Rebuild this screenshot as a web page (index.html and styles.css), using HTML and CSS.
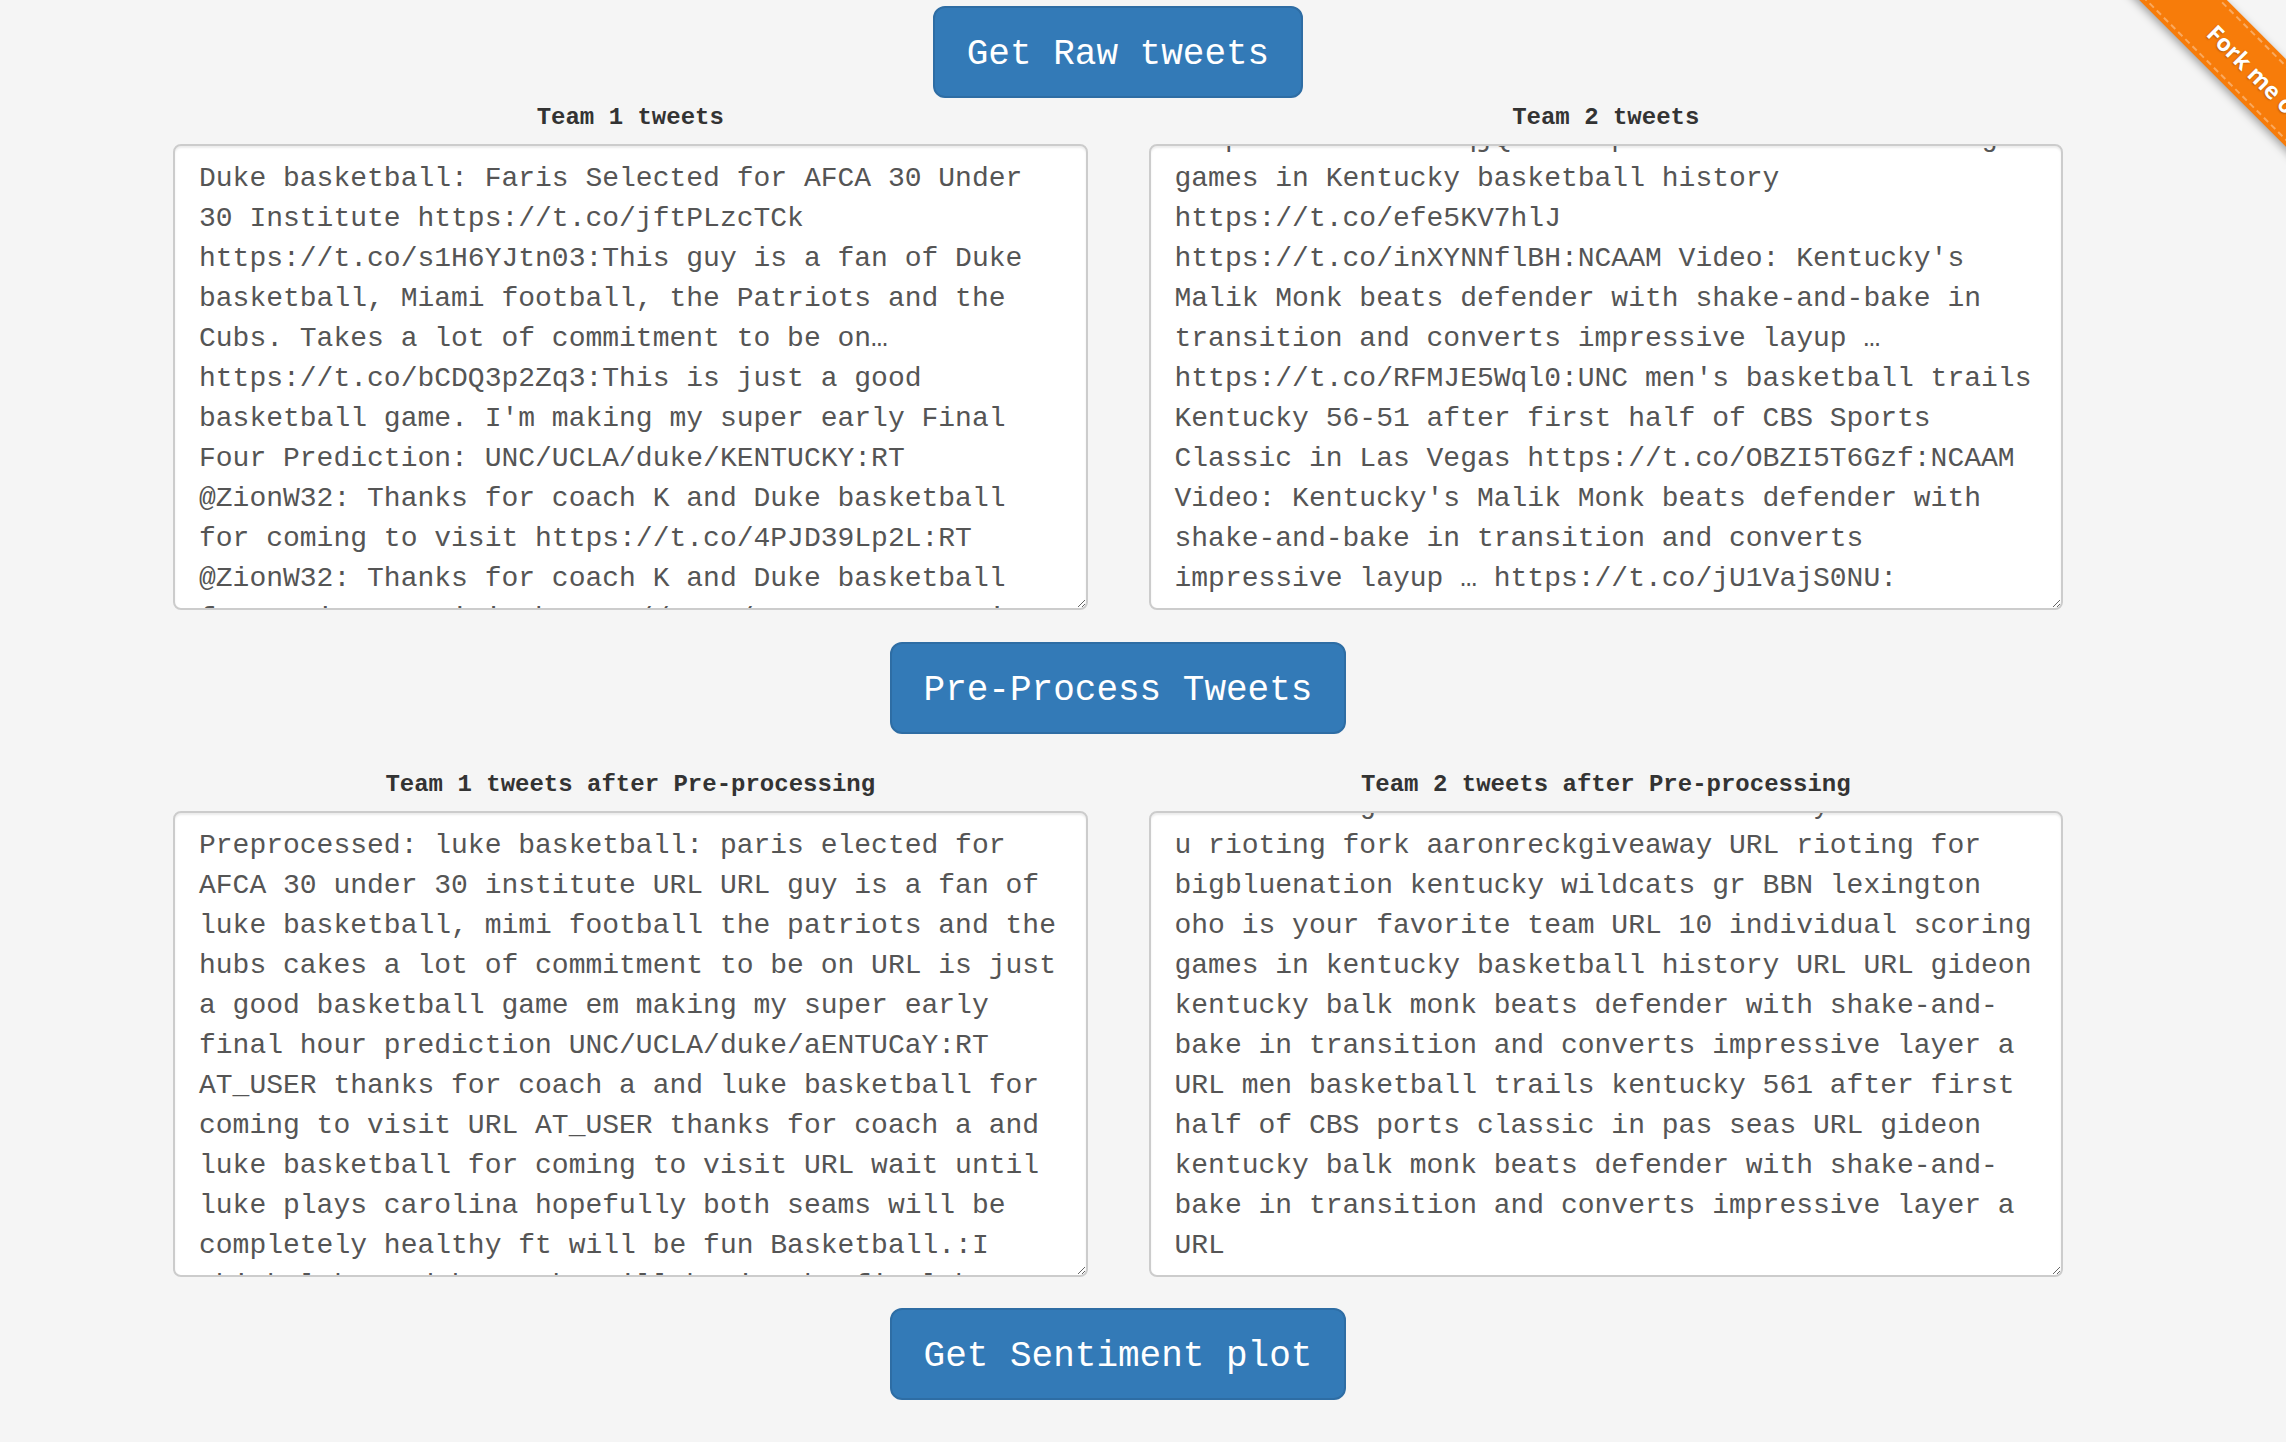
FILE: index.html
```html
<!DOCTYPE html>
<html lang="en">
<head>
<meta charset="utf-8">
<title>Tweet Sentiment</title>
<link rel="stylesheet" href="styles.css">
</head>
<body>
<div class="ribbon-wrap"><a class="ribbon" href="#"><span class="ribbon-text">Fork me on GitHub</span></a></div>
<main class="page">
  <div class="actions"><button class="btn">Get Raw tweets</button></div>
  <div class="pair pair-raw">
    <div class="field">
      <label class="field-label" for="t1">Team 1 tweets</label>
      <textarea id="t1" class="tweets">Duke basketball: Faris Selected for AFCA 30 Under 30 Institute https://t.co/jftPLzcTCk https://t.co/s1H6YJtn03:This guy is a fan of Duke basketball, Miami football, the Patriots and the Cubs. Takes a lot of commitment to be on… https://t.co/bCDQ3p2Zq3:This is just a good basketball game. I'm making my super early Final Four Prediction: UNC/UCLA/duke/KENTUCKY:RT @ZionW32: Thanks for coach K and Duke basketball for coming to visit https://t.co/4PJD39Lp2L:RT @ZionW32: Thanks for coach K and Duke basketball for coming to visit https://t.co/4PJD39Lp2L:Can't wait until Duke plays Carolina hopefully both teams will be completely healthy it will be fun Basketball.:</textarea>
    </div>
    <div class="field">
      <label class="field-label" for="t2">Team 2 tweets</label>
      <textarea id="t2" class="tweets">https://t.co/Ze1oqjQuzE:Top 10 individual scoring games in Kentucky basketball history https://t.co/efe5KV7hlJ https://t.co/inXYNNflBH:NCAAM Video: Kentucky's Malik Monk beats defender with shake-and-bake in transition and converts impressive layup … https://t.co/RFMJE5Wql0:UNC men's basketball trails Kentucky 56-51 after first half of CBS Sports Classic in Las Vegas https://t.co/OBZI5T6Gzf:NCAAM Video: Kentucky's Malik Monk beats defender with shake-and-bake in transition and converts impressive layup … https://t.co/jU1VajS0NU:</textarea>
    </div>
  </div>
  <div class="actions actions-mid"><button class="btn">Pre-Process Tweets</button></div>
  <div class="pair pair-pre">
    <div class="field">
      <label class="field-label" for="t3">Team 1 tweets after Pre-processing</label>
      <textarea id="t3" class="tweets">Preprocessed: luke basketball: paris elected for AFCA 30 under 30 institute URL URL guy is a fan of luke basketball, mimi football the patriots and the hubs cakes a lot of commitment to be on URL is just a good basketball game em making my super early final hour prediction UNC/UCLA/duke/aENTUCaY:RT AT_USER thanks for coach a and luke basketball for coming to visit URL AT_USER thanks for coach a and luke basketball for coming to visit URL wait until luke plays carolina hopefully both seams will be completely healthy ft will be fun Basketball.:I think luke and kentucky will be in the final hour</textarea>
    </div>
    <div class="field">
      <label class="field-label" for="t4">Team 2 tweets after Pre-processing</label>
      <textarea id="t4" class="tweets">basketball gr BBN wildcats and kentucky 5000 who i u rioting fork aaronreckgiveaway URL rioting for bigbluenation kentucky wildcats gr BBN lexington oho is your favorite team URL 10 individual scoring games in kentucky basketball history URL URL gideon kentucky balk monk beats defender with shake-and-bake in transition and converts impressive layer a URL men basketball trails kentucky 561 after first half of CBS ports classic in pas seas URL gideon kentucky balk monk beats defender with shake-and-bake in transition and converts impressive layer a URL</textarea>
    </div>
  </div>
  <div class="actions actions-last"><button class="btn">Get Sentiment plot</button></div>
</main>
<script src="script.js"></script>
</body>
</html>
```
FILE: styles.css
```css
html, body {
  margin: 0;
  padding: 0;
  background: #f5f5f5;
}

body {
  font-family: "Liberation Mono", "Courier New", monospace;
  overflow: hidden;
  position: relative;
  min-height: 1442px;
}

.page {
  width: 1890px;
  margin-left: 173px;
  padding-top: 6px;
}

.actions {
  display: flex;
  justify-content: center;
}

.actions-mid {
  margin-top: 32px;
}

.actions-last {
  margin-top: 31px;
}

.btn {
  font-family: "Liberation Mono", "Courier New", monospace;
  font-size: 36px;
  line-height: 48px;
  color: #fff;
  background: #337ab7;
  border: 2px solid #2e6da4;
  border-radius: 12px;
  padding: 23px 32px 17px;
  margin: 0;
  cursor: pointer;
}

.pair {
  display: grid;
  grid-template-columns: 1fr 1fr;
  column-gap: 61px;
}

.pair-raw {
  margin-top: 3px;
}

.pair-pre {
  margin-top: 34px;
}

.field {
  display: flex;
  flex-direction: column;
  min-width: 0;
}

.field-label {
  font-family: "Liberation Mono", "Courier New", monospace;
  font-weight: bold;
  font-size: 24px;
  line-height: 34px;
  color: #333;
  text-align: center;
  margin-bottom: 9px;
}

.tweets {
  display: block;
  box-sizing: border-box;
  width: 100%;
  height: 466px;
  margin: 0;
  padding: 13px 24px 11px;
  font-family: "Liberation Mono", "Courier New", monospace;
  font-size: 28px;
  line-height: 40px;
  color: #555;
  background: #fff;
  border: 2px solid #ccc;
  border-radius: 8px;
  box-shadow: inset 0 2px 2px rgba(0, 0, 0, 0.075);
  overflow: hidden;
  resize: both;
  outline: none;
}

.ribbon-wrap {
  position: absolute;
  top: 0;
  right: 0;
  width: 300px;
  height: 300px;
  overflow: hidden;
  pointer-events: none;
}

.ribbon {
  position: absolute;
  left: 102px;
  top: 74px;
  width: 400px;
  height: 62px;
  box-sizing: border-box;
  padding: 4px 0;
  transform: rotate(45deg);
  background: #f77c0a;
  box-shadow: 0 3px 8px rgba(0, 0, 0, 0.35);
  text-decoration: none;
  display: flex;
  pointer-events: auto;
}

.ribbon-text {
  flex: 1;
  border-top: 2px dashed rgba(255, 255, 255, 0.35);
  border-bottom: 2px dashed rgba(255, 255, 255, 0.35);
  color: #fff;
  font-family: "Open Sans", "DejaVu Sans", sans-serif;
  font-weight: bold;
  font-size: 23px;
  line-height: 50px;
  text-align: center;
  text-shadow: 0 1px 2px rgba(0, 0, 0, 0.3);
}
```
FILE: script.js
```js
document.getElementById('t2').scrollTop = 40;
document.getElementById('t4').scrollTop = 40;
```
